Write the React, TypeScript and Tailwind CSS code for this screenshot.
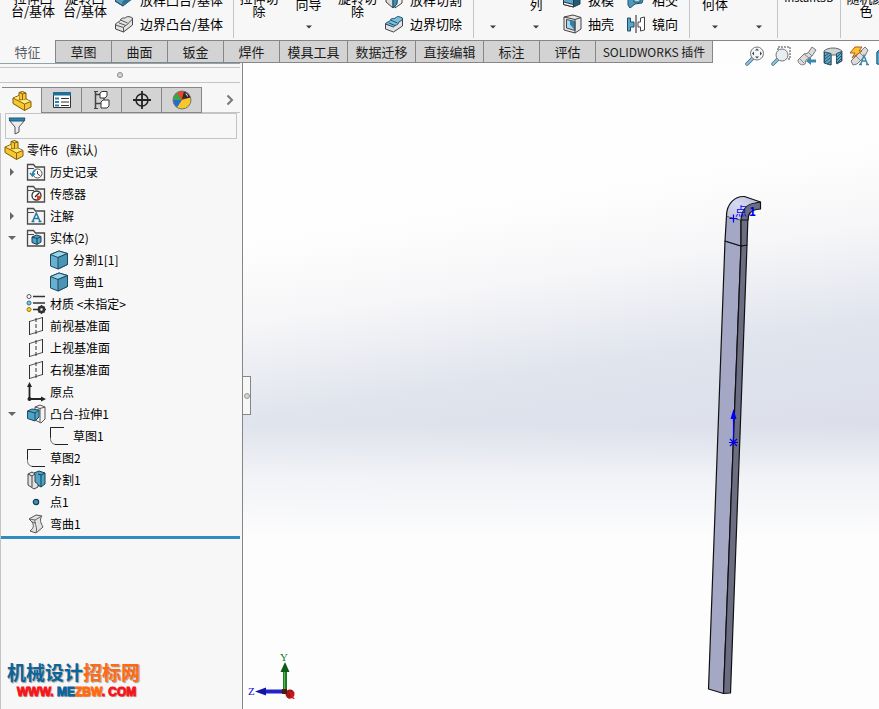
import type { ReactNode } from "react";

/* ---------- shared drawing pieces ---------- */

function Icon({ children, size = "size-5" }: { children: ReactNode; size?: string }) {
  return (
    <svg viewBox="0 0 20 20" className={`${size} shrink-0`} fill="none" aria-hidden="true">
      {children}
    </svg>
  );
}

function CaretDown() {
  return (
    <svg viewBox="0 0 6 4" className="h-1 w-1.5" aria-hidden="true">
      <path d="M0 0.5h6L3 3.5z" fill="#3c3c3c" />
    </svg>
  );
}

/* ---------- ribbon icons ---------- */

const loftBoss = (
  <Icon>
    <path d="M1 11L8 4l10 5-9 7z" fill="#5b9dbd" stroke="#1f4e66" />
    <path d="M9 16l9-7-4-2-6 5z" fill="#2f7194" />
    <path d="M1 11l8 5" stroke="#1f4e66" />
  </Icon>
);

const boundaryBoss = (
  <Icon>
    <path d="M1.500 11c1-4 4-2 5-5 1-3 4-1 6-3 1-1 5 0 6 1v7l-9 7-8-3z" fill="#e3e3e3" stroke="#444" strokeLinejoin="round" />
    <path d="M1.500 11l8 2.500c2-3 4-2 5-4.500 1-2 3-1 4-5M9.500 13.500V18M6.500 6l7 3M5 9l7 2.500" stroke="#555" />
  </Icon>
);

const loftCut = (
  <Icon>
    <path d="M2 3h7v15l-7-6z" fill="#d9d9d9" stroke="#444" />
    <path d="M11 4l7-2v11l-7 5z" fill="#f0f0f0" stroke="#444" />
    <path d="M9 4h5l-1 10-4 4z" fill="#3d8db4" stroke="#1f4e66" />
  </Icon>
);

const boundaryCut = (
  <Icon>
    <path d="M1.500 10v5l8 3 9-6V5l-9 7z" fill="#e3e3e3" stroke="#444" strokeLinejoin="round" />
    <path d="M1.500 10c1-3 4-1 5-4s4 0 6-3c1-1 4 0 6 1 0 4-3 2-4 5s-3 1-5 4z" fill="#7cc0e0" stroke="#1f4e66" strokeLinejoin="round" />
    <path d="M6.500 6l7 3M5 9l6 2.500" stroke="#1f4e66" />
  </Icon>
);

const draft = (
  <Icon>
    <path d="M1.500 4l10 3v10l-10-2.500z" fill="#5aa7cb" stroke="#1f3e50" />
    <path d="M1.500 12l10 2.500V17l-10-2.500z" fill="#f4f4f4" stroke="#333" />
    <path d="M11.500 7L18 5v9l-6.500 3z" fill="#235a78" stroke="#1f3e50" />
  </Icon>
);

const shell = (
  <Icon>
    <path d="M2 3l9-2 8 2.500v11.500l-6 4L2 16z" fill="#e8e8e8" stroke="#444" strokeLinejoin="round" />
    <path d="M4.500 5.500l8.500 2v9l-8.500-2.500z" fill="#a9d8ee" stroke="#444" />
    <path d="M8 6.500l5 1v9L8 10.500z" fill="#2d82ab" />
    <path d="M2 3l11 2.500V19M13 5.500l6-2" stroke="#444" />
  </Icon>
);

const intersect = (
  <Icon>
    <path d="M2 4l12-1 4 3-2 7-7 1-5 4-2-3z" fill="#4b9bc0" stroke="#1f4e66" strokeLinejoin="round" />
    <path d="M8 5h6v7H8z" fill="#a9d8ee" stroke="#1f4e66" />
  </Icon>
);

const mirror = (
  <Icon>
    <path d="M1.500 4h3v4H8v5H4.500v4h-3z" fill="#5aa7cb" stroke="#1f4e66" />
    <path d="M18.500 3l-4 1v4H12v5h2.500v4l4-1z" fill="#fff" stroke="#444" />
    <path d="M10 1v18" stroke="#222" />
  </Icon>
);

/* ---------- ribbon ---------- */

function BigCommand({
  lines,
  width,
  menu = false,
  size = "text-[13px]",
}: {
  lines: string[];
  width: string;
  menu?: boolean;
  size?: string;
}) {
  return (
    <button type="button" className={`${width} ${size} flex shrink-0 flex-col items-center leading-[13px]`}>
      {lines.map((line) => (
        <span key={line} className="whitespace-nowrap">
          {line}
        </span>
      ))}
      {menu ? (
        <span className="flex h-[30px] flex-col justify-end pb-[11px]">
          <CaretDown />
        </span>
      ) : (
        <span className="h-[23px]" />
      )}
    </button>
  );
}

function CommandStack({ items, className }: { items: [ReactNode, string][]; className: string }) {
  return (
    <div className={`${className} flex shrink-0 flex-col pb-1`}>
      {items.map(([icon, label]) => (
        <button key={label} type="button" className="flex h-6 items-center gap-1.5 text-[13px] whitespace-nowrap">
          {icon}
          {label}
        </button>
      ))}
    </div>
  );
}

function Divider() {
  return <span className="mb-0.5 h-14 w-px shrink-0 bg-[#c4c4c4]" />;
}

function Ribbon() {
  return (
    <header className="flex h-10 shrink-0 items-end overflow-hidden bg-[#f7f7f7] pl-[7px]">
      <BigCommand lines={["拉伸凸", "台/基体"]} width="w-[52px]" />
      <BigCommand lines={["旋转凸", "台/基体"]} width="w-[52px]" />
      <CommandStack
        className="w-[122px] pl-[3px]"
        items={[
          [loftBoss, "放样凸台/基体"],
          [boundaryBoss, "边界凸台/基体"],
        ]}
      />
      <Divider />
      <BigCommand lines={["拉伸切", "除"]} width="w-[50px]" />
      <BigCommand lines={["异型孔", "向导"]} width="w-[49px]" menu />
      <BigCommand lines={["旋转切", "除"]} width="w-[49px]" />
      <CommandStack
        className="w-[91px] pl-[2px]"
        items={[
          [loftCut, "放样切割"],
          [boundaryCut, "边界切除"],
        ]}
      />
      <Divider />
      <BigCommand lines={["圆角"]} width="w-[38px] [&>span:first-child]:mb-3.5" menu />
      <BigCommand lines={["线性阵", "列"]} width="w-[48px]" menu />
      <CommandStack
        className="w-[64px] pl-[2px]"
        items={[
          [draft, "拔模"],
          [shell, "抽壳"],
        ]}
      />
      <CommandStack
        className="w-[65px] pl-[2px]"
        items={[
          [intersect, "相交"],
          [mirror, "镜向"],
        ]}
      />
      <Divider />
      <BigCommand lines={["参考几", "何体"]} width="w-[50px]" menu />
      <BigCommand lines={["曲线"]} width="w-[37px] [&>span:first-child]:mb-3.5" menu />
      <Divider />
      <BigCommand lines={["Instant3D", "\u00a0"]} width="w-[62px]" size="text-[11px]" />
      <Divider />
      <BigCommand lines={["随机颜", "色"]} width="w-[50px]" />
    </header>
  );
}

/* ---------- command tabs and view toolbar ---------- */

const commandTabs: [string, string][] = [
  ["草图", "w-14"],
  ["曲面", "w-14"],
  ["钣金", "w-14"],
  ["焊件", "w-14"],
  ["模具工具", "w-[68px]"],
  ["数据迁移", "w-[68px]"],
  ["直接编辑", "w-[68px]"],
  ["标注", "w-14"],
  ["评估", "w-14"],
  ["SOLIDWORKS 插件", "w-[117px] text-xs"],
];

const viewTools: [string, ReactNode][] = [
  [
    "整屏显示全图",
    <>
      <path d="M2 18l6-6" stroke="#3f6f8a" strokeWidth="3.500" strokeLinecap="round" />
      <path d="M2 18l6-6" stroke="#8fc3dd" strokeWidth="2" strokeLinecap="round" />
      <circle cx="12" cy="7.500" r="6.500" fill="#f3f6f8" stroke="#777" />
      <path d="M12 2.500l2 2h-4zM12 12.500l2-2h-4zM7 7.500l2-2v4zM17 7.500l-2-2v4z" fill="#444" />
    </>,
  ],
  [
    "局部放大",
    <>
      <path d="M7 4V1h12v12h-3" stroke="#444" strokeDasharray="2 1" />
      <path d="M2 18l5-5" stroke="#3f6f8a" strokeWidth="3.500" strokeLinecap="round" />
      <path d="M2 18l5-5" stroke="#8fc3dd" strokeWidth="2" strokeLinecap="round" />
      <circle cx="11" cy="9" r="6" fill="#e6eef3" stroke="#777" />
    </>,
  ],
  [
    "上一视图",
    <>
      <path d="M1 14l6-6 4-1 4-6 4 3-4 6-6 4-1 4c-3 2-7 0-7-4z" fill="#dcdcdc" stroke="#777" />
      <path d="M7 8l5 4M11 6l4 4M3 13l4 4" stroke="#888" />
      <path d="M9 15l5-4v2.500h5v3h-5V19z" fill="#3a86ad" />
    </>,
  ],
  [
    "剖面视图",
    <>
      <path d="M1 5c4-4 14-4 18 0v10l-5 3V9H8v10l-7-2z" fill="#cfd4d6" stroke="#666" />
      <path d="M1.500 6L8 7.500V19l-6.500-2zM13.500 7.500l5-2V15l-5 2.500z" fill="#62a9c8" stroke="#24546c" />
      <path d="M2 10l4-3M2 13l5-4M2 16l5-4M4 18l4-3M14 11l4-4M14 14l4-4M14 17l4-4" stroke="#24546c" />
    </>,
  ],
  [
    "动态注解视图",
    <>
      <path d="M2 15l10-10 4-4 3 3-3 6-8 8-4 1z" fill="#dcdcdc" stroke="#777" />
      <path d="M7 10l4 4M10 6l4 4" stroke="#888" />
      <path d="M6 1h7l-3 4h3l-10 7 3-5H1z" fill="#ffc52d" stroke="#b3541e" />
      <path d="M11.500 18.500l3.500-9 3.500 9M13 15h4M10 18.500h3M17 18.500h3" stroke="#3a86ad" strokeWidth="1.500" />
    </>,
  ],
  [
    "视图定向",
    <>
      <path d="M2 6l4-4h13v16H2z" fill="#a9d8ee" stroke="#1f6688" />
      <path d="M2 6h13v12H2z" fill="#5aa7cb" stroke="#1f6688" />
    </>,
  ],
];

function TabStrip() {
  return (
    <nav className="flex h-[23px] shrink-0 bg-[#fdfdfd] text-[13px] text-[#1c1c1c]">
      <button type="button" className="w-[55px] shrink-0 bg-[#f7f7f7] text-[#5a6068]">
        特征
      </button>
      <div className="flex shrink-0 border-l border-[#868686]">
        {commandTabs.map(([label, width]) => (
          <button
            key={label}
            type="button"
            className={`${width} shrink-0 border-y border-r border-[#868686] bg-[#d3d3d3] whitespace-nowrap`}
          >
            {label}
          </button>
        ))}
      </div>
      <div className="z-10 flex min-w-0 grow items-start gap-1.5 border-t border-[#868686] pt-[5px] pl-8">
        {viewTools.map(([label, drawing]) => (
          <button key={label} type="button" aria-label={label} className="shrink-0">
            <Icon>{drawing}</Icon>
          </button>
        ))}
      </div>
    </nav>
  );
}

/* ---------- feature tree icons ---------- */

const part = (
  <Icon>
    <path d="M1 7l6-2.500v-3L10.500.5 14 2v6l5 2.500V16l-6.500 3.500L1 12.500z" fill="#f7c72c" stroke="#7a5a10" strokeLinejoin="round" />
    <path d="M7 1.500L10.500 3v6.500L14 8M10.500 3L14 2M7 4.500V8l3.500 1.500" stroke="#8a6510" />
    <path d="M1.500 7.200L7 5v3l-2.500 1zM7.500 10l3-1 3.500-.5 4.500 2-6 2.500z" fill="#ffe88a" />
    <path d="M1 7l11.500 6 6.500-2.500M12.500 13v6.500" stroke="#8a6510" />
  </Icon>
);

function Folder({ children }: { children: ReactNode }) {
  return (
    <Icon>
      <path d="M1.500 18V2.500h6l2 2.500h9v13z" fill="#f4f4f4" stroke="#4a4a4a" strokeWidth="1.300" />
      <path d="M2 6.500h6" stroke="#4a4a4a" />
      {children}
    </Icon>
  );
}

const history = (
  <Folder>
    <circle cx="11.500" cy="11.500" r="4.500" fill="#fff" stroke="#555" />
    <path d="M11.500 9v3l3 2" stroke="#444" />
    <path d="M4 11l2.500 3L9 11.500M6.500 13c0-3 1-4 3-5" stroke="#2b83ab" strokeWidth="1.500" />
  </Folder>
);

const sensor = (
  <Folder>
    <circle cx="10.500" cy="11.500" r="4.500" fill="#fff" stroke="#333" strokeWidth="1.300" />
    <path d="M11 16a4.500 4.500 0 004-4.500l-4 .5z" fill="#e5391e" />
    <path d="M9 13l4-4" stroke="#222" strokeWidth="1.300" />
  </Folder>
);

const annotation = (
  <Folder>
    <path d="M6.500 15.500l3.800-8.500 3.800 8.500M8 12.500h4.800M5.500 15.500h3M12.500 15.500h3" stroke="#25789e" strokeWidth="1.500" />
  </Folder>
);

const solids = (
  <Folder>
    <path d="M6 9l4.500-2L15 8.500v5.500l-4 2.500-5-2z" fill="#4fa3c7" stroke="#173f54" />
    <path d="M6 9l5 1.500 4-2M11 10.500V16" stroke="#173f54" />
  </Folder>
);

const body = (
  <Icon>
    <path d="M1.500 4.500L10 1l8.500 2.500v11L9 19l-7.500-3z" fill="#68b0d0" stroke="#1c4a60" strokeLinejoin="round" />
    <path d="M1.500 4.500L10 1l8.500 2.500L9 7.500z" fill="#9dd4ea" stroke="#1c4a60" strokeLinejoin="round" />
    <path d="M9 7.500l9.500-4v11L9 19z" fill="#4a95b6" stroke="#1c4a60" strokeLinejoin="round" />
  </Icon>
);

const material = (
  <Icon>
    <path d="M7 2.500h12M7 9h12M7 15.500h5" stroke="#333" strokeWidth="1.500" />
    <circle cx="3" cy="2.500" r="2" fill="#fff" stroke="#555" />
    <circle cx="3" cy="9" r="2" fill="#78c6ea" stroke="#2b6d8d" />
    <circle cx="3" cy="15.500" r="2" fill="#ffd21f" stroke="#a07800" />
    <circle cx="15.500" cy="15.500" r="2.500" stroke="#333" strokeWidth="2.500" />
    <path d="M15.500 11v2M15.500 18v2M11 15.500h2M18 15.500h2M12.500 12.500l1.500 1.500M17 17l1.500 1.500M18.500 12.500L17 14M14 17l-1.500 1.500" stroke="#333" strokeWidth="1.500" />
  </Icon>
);

const plane = (
  <Icon>
    <path d="M3.500 5.500l13-4v13l-13 4z" stroke="#555" />
    <path d="M3.500 5v14M16.500 1v14" stroke="#333" />
    <path d="M10 2v17" stroke="#333" strokeDasharray="4 2" />
  </Icon>
);

const origin = (
  <Icon>
    <path d="M3.500 4v13h12" stroke="#222" strokeWidth="1.800" />
    <path d="M3.500 0L6 5H1zM20 17l-5-2.500v5z" fill="#222" />
    <circle cx="3.500" cy="17" r="2" fill="#222" />
  </Icon>
);

const extrude = (
  <Icon>
    <path d="M9 3l5-2 5 2v12l-4 4-6-3z" fill="#f4f4f4" stroke="#555" strokeLinejoin="round" />
    <path d="M9 3l5 1.500V18M14 4.500L19 3" stroke="#555" />
    <path d="M1.500 7L6 5l7 1v7l-4 4-7.500-2.500z" fill="#4fa3c7" stroke="#1c4a60" strokeLinejoin="round" />
    <path d="M1.500 7L9 9l4-3M9 9v8" stroke="#1c4a60" />
  </Icon>
);

const sketch = (
  <Icon>
    <path d="M1.500 1.500v11c0 3.500 2 6 6 6" stroke="#666" />
    <path d="M15 1.500H1.500v10M6 18.500h13" stroke="#222" />
  </Icon>
);

const split = (
  <Icon>
    <path d="M8 3l5-2 6 2v11l-4 3-7-4z" fill="#4fa3c7" stroke="#173f54" strokeLinejoin="round" />
    <path d="M12 4l3 1v12M15 5l4-2" stroke="#173f54" />
    <path d="M2 4l4-2 3 2v8l3 2v3l-4 2-6-4z" fill="#e2e2e2" stroke="#444" strokeLinejoin="round" />
    <path d="M2 4l4 2v11M6 6l3-2" stroke="#444" />
  </Icon>
);

const point = (
  <Icon>
    <circle cx="10" cy="10" r="2.700" fill="#3b93ba" stroke="#173f54" strokeWidth="1.200" />
  </Icon>
);

const flex = (
  <Icon>
    <path d="M3 5l7-4 6 1c-3 4-1 7 1 11l-7 6-6-2c4-3 4-6 2-9z" fill="#e2e2e2" stroke="#555" strokeLinejoin="round" />
    <path d="M3 5l6 1 7-4M9 6c-1 4 3 7 1 13M6 8l4 1" stroke="#666" />
  </Icon>
);

/* ---------- feature tree ---------- */

type Node = { id: string; label: string; icon: ReactNode; open?: boolean; children?: Node[] };

const features: Node[] = [
  { id: "history", label: "历史记录", icon: history, open: false },
  { id: "sensor", label: "传感器", icon: sensor },
  { id: "notes", label: "注解", icon: annotation, open: false },
  {
    id: "solids",
    label: "实体(2)",
    icon: solids,
    open: true,
    children: [
      { id: "solid-split", label: "分割1[1]", icon: body },
      { id: "solid-flex", label: "弯曲1", icon: body },
    ],
  },
  { id: "material", label: "材质 <未指定>", icon: material },
  { id: "front", label: "前视基准面", icon: plane },
  { id: "top", label: "上视基准面", icon: plane },
  { id: "right", label: "右视基准面", icon: plane },
  { id: "origin", label: "原点", icon: origin },
  {
    id: "extrude",
    label: "凸台-拉伸1",
    icon: extrude,
    open: true,
    children: [{ id: "sketch1", label: "草图1", icon: sketch }],
  },
  { id: "sketch2", label: "草图2", icon: sketch },
  { id: "split", label: "分割1", icon: split },
  { id: "point", label: "点1", icon: point },
  { id: "flex", label: "弯曲1", icon: flex },
];

function TreeNode({ node }: { node: Node }) {
  return (
    <li>
      <div className="flex h-[22px] items-center">
        {node.open === undefined ? (
          <span className="w-[22px]" />
        ) : (
          <button type="button" aria-label={node.label} aria-expanded={node.open} className="flex w-[22px] pl-1">
            <svg viewBox="0 0 8 8" className="size-2">
              <path d={node.open ? "M0 2h8L4 6z" : "M2 0v8l4-4z"} fill="#666" />
            </svg>
          </button>
        )}
        <span className="flex w-6">{node.icon}</span>
        <span className="whitespace-pre">{node.label}</span>
      </div>
      {node.children && (
        <ul className="pl-[23px]">
          {node.children.map((child) => (
            <TreeNode key={child.id} node={child} />
          ))}
        </ul>
      )}
    </li>
  );
}

const managerTabs: [string, ReactNode][] = [
  [
    "属性管理器",
    <Icon>
      <path d="M1.500 2.500h17v15h-17z" fill="#fff" stroke="#333" />
      <path d="M1 2h18v3.500H1z" fill="#1f6f96" />
      <path d="M3 7.500h4v2H3zM3 11h4v2H3zM3 14.500h4v2H3z" fill="#2b83ab" />
      <path d="M9 8.500h8M9 12h8M9 15.500h8" stroke="#333" />
    </Icon>,
  ],
  [
    "配置管理器",
    <Icon>
      <path d="M3.500 1v18M3.500 4.500H9M3.500 13.500H9" stroke="#444" strokeWidth="1.500" />
      <path d="M2 1.500h4M2 18.500h4" stroke="#444" />
      <path d="M8 3l2-1.500h5V6l-2 2H8zM9 12l2-2h6v6l-2 2H9z" fill="#fff" stroke="#333" />
      <path d="M12 8v2" stroke="#333" />
    </Icon>,
  ],
  [
    "尺寸专家",
    <Icon>
      <circle cx="10" cy="10" r="6" stroke="#222" strokeWidth="1.500" />
      <path d="M10 1v18M1 10h18" stroke="#222" strokeWidth="1.800" />
    </Icon>,
  ],
  [
    "外观管理器",
    <Icon>
      <circle cx="10" cy="10" r="9" fill="#e8342a" />
      <path d="M1 10a9 9 0 014-7.500L10 10z" fill="#37a84a" />
      <path d="M5 2.500a9 9 0 018-1L10 10z" fill="#f0432d" />
      <path d="M10 10H1a9 9 0 004 7.500z" fill="#1f6fd0" />
      <path d="M10 10l-5 7.500c3 2 7 2 10 0 3-2 5-6 3.500-10z" fill="#f6c92b" />
      <path d="M10 9l8.500-1.500C17.500 4 15 2 12 1.200z" fill="#2a2a2a" />
      <path d="M13 3.500c2 0 3 2 3 3.500z" fill="#f2f2f2" />
      <circle cx="10" cy="10" r="9" stroke="#777" />
    </Icon>,
  ],
];

function FeatureManager() {
  return (
    <aside className="flex w-[243px] shrink-0 flex-col border-r border-[#868686] bg-[#f7f7f7] text-xs">
      <div className="mr-0.5 h-[5px] border-y border-t-[#8fa3aa] border-b-[#c4c4c4]" />
      <div className="mr-0.5 flex h-[15px] items-center justify-center border-b border-[#c4c4c4]">
        <span className="size-1.5 rounded-full border border-[#8a8a8a] bg-[#d3d3d3]" />
      </div>
      <div className="mt-1 mr-0.5 flex h-[26px] shrink-0 pl-0.5">
        <button type="button" aria-label="特征管理器设计树" className="flex w-[39px] items-center justify-center border-t border-[#868686]">
          {part}
        </button>
        {managerTabs.map(([label, icon], i) => (
          <button
            key={label}
            type="button"
            aria-label={label}
            className={`${i === 0 ? "w-[41px] border-x" : "w-10 border-r"} flex items-center justify-center border-y border-[#868686] bg-[#d3d3d3]`}
          >
            {icon}
          </button>
        ))}
        <button type="button" aria-label="更多" className="flex grow items-center justify-end border-b border-[#c4c4c4] pr-1">
          <svg viewBox="0 0 12 12" className="size-3" fill="none">
            <path d="M3.500 1.500L8 6l-4.500 4.500" stroke="#777" strokeWidth="2" />
          </svg>
        </button>
      </div>
      <div className="flex grow flex-col border-l border-[#c4c4c4]">
        <label className="mr-[5px] ml-1 flex h-[26px] items-center border border-[#c4c4c4] pl-0.5">
          <svg viewBox="0 0 18 18" className="size-[18px] shrink-0" fill="none" aria-hidden="true">
            <path d="M1 3l6 7v7l4-2v-5l6-7z" fill="#ececec" stroke="#555" strokeLinejoin="round" />
            <path d="M1 1h16l-1 3H2z" fill="#2b83ab" stroke="#1c5a78" />
          </svg>
          <input type="text" aria-label="过滤器" className="h-5 min-w-0 grow bg-transparent px-1 outline-none" />
        </label>
        <div className="mr-0.5 border-b-[3px] border-[#338ac0] pb-px">
          <div className="flex h-[22px] items-center pl-[3px]">
            <span className="flex w-[23px]">{part}</span>
            <span>零件6</span>
            <span className="ml-2">(默认)</span>
          </div>
          <ul className="pl-[3px]">
            {features.map((node) => (
              <TreeNode key={node.id} node={node} />
            ))}
          </ul>
        </div>
        <div className="mt-auto pb-2.5 pl-1.5 font-bold [text-shadow:1px_1px_1px_#999]">
          <p className="text-[19px] leading-[26px] whitespace-nowrap text-[#0b659b]">
            机械设计<span className="text-[#ff6a13]">招标网</span>
          </p>
          <p className="pl-2.5 font-['Liberation_Sans',sans-serif] text-xs leading-[14px] whitespace-pre text-[#f5141b] [-webkit-text-stroke:1px]">
            WWW. <span className="text-[#0b659b]">ME</span>
            <span className="text-[#ff6a13]">ZBW</span>. COM
          </p>
        </div>
      </div>
    </aside>
  );
}

/* ---------- graphics area ---------- */

function Model() {
  return (
    <svg viewBox="700 185 70 515" className="absolute top-[122px] left-[457px] h-[515px] w-[70px]" aria-label="弯曲1">
      <defs>
        <linearGradient id="bend" x1="0" y1="1" x2="1" y2="0">
          <stop offset="0" stopColor="#b9bddb" />
          <stop offset="0.500" stopColor="#d5d9f2" />
          <stop offset="1" stopColor="#b4b8d6" />
        </linearGradient>
      </defs>
      <g stroke="#111" strokeWidth="1.200" strokeLinejoin="round">
        <path d="M725 241l16 5-17.500 447.500L708.500 689z" fill="#a4a8c4" />
        <path d="M741 246l6-1-16.500 448-7 .5z" fill="#6c6d82" />
        <path d="M726.500 216l14.500 4v26l-16-5z" fill="#a4a8c4" />
        <path d="M741 220l7-5-1 30-6 1z" fill="#6c6d82" />
        <path d="M726.500 216c0-12 8-20 18-19.500l16 5.500c-12 0-19 7-19.500 18z" fill="url(#bend)" stroke="none" />
        <path d="M726.500 216c0-12 8-20 18-19.500l16 5.500" fill="none" />
        <path d="M741 220c.5-10 6-16 14-17l5.500-1v7l-4 .5c-6 1-8.500 5-8.500 10.500z" fill="#6c6d82" />
      </g>
      <g stroke="#0000f0" strokeWidth="1.200" fill="none">
        <path d="M729.500 218.500h8M733.500 214.500v8" />
        <path d="M733.500 418v24M729 442.500h9M730 439l7 7M737 439l-7 7" />
      </g>
      <path d="M733.500 409l3 10h-6z" fill="#0000f0" />
      <text x="735" y="216" fontSize="12" fill="#0000f0">
        点
      </text>
      <text x="749" y="216" fontSize="12" fontWeight="bold" fill="#0000f0">
        1
      </text>
    </svg>
  );
}

function Triad() {
  return (
    <svg viewBox="245 650 56 54" className="absolute bottom-[5px] left-0.5 h-[54px] w-14" aria-label="坐标轴">
      <path d="M264 689.500h21v4h-21z" fill="#2323c8" />
      <path d="M255 691.500l11-4v8z" fill="#1414a8" />
      <path d="M283 671h4v20h-4z" fill="#1d7a24" />
      <path d="M284 671h1v20h-1z" fill="#57b45c" />
      <path d="M285 662l4.500 10h-9z" fill="#0f5a16" />
      <circle cx="290" cy="694" r="4.500" fill="#a01818" />
      <path d="M282 689h5v5h-5z" fill="#4a1c12" />
      <g fontFamily="Liberation Serif, serif" fontSize="11">
        <text x="280" y="661" fill="#0a7a12">
          Y
        </text>
        <text x="248" y="695" fill="#0a0ae0">
          Z
        </text>
        <text x="288" y="699" fontSize="10" fill="#f01414">
          X
        </text>
      </g>
    </svg>
  );
}

function GraphicsArea() {
  return (
    <main className="relative min-w-0 grow overflow-hidden bg-[linear-gradient(to_bottom,transparent_56%,#ffffff99_64%,#fdfdfd_74%),linear-gradient(171deg,#fefefe_24%,#f6f6f8_35%,#e0e4ed_48%,#dcdfea_62%)]">
      <button
        type="button"
        aria-label="折叠面板"
        className="absolute top-[313px] left-0 flex h-[39px] w-2 items-center justify-center border-y border-r border-[#868686] bg-[#f7f7f7]"
      >
        <span className="size-1.5 shrink-0 rounded-full border border-[#999] bg-[#d3d3d3]" />
      </button>
      <Model />
      <Triad />
    </main>
  );
}

export default function App() {
  return (
    <div className="flex h-screen flex-col overflow-hidden bg-[#f7f7f7] font-['Noto_Sans_CJK_SC',sans-serif] text-black">
      <Ribbon />
      <TabStrip />
      <div className="flex min-h-0 grow">
        <FeatureManager />
        <GraphicsArea />
      </div>
    </div>
  );
}
